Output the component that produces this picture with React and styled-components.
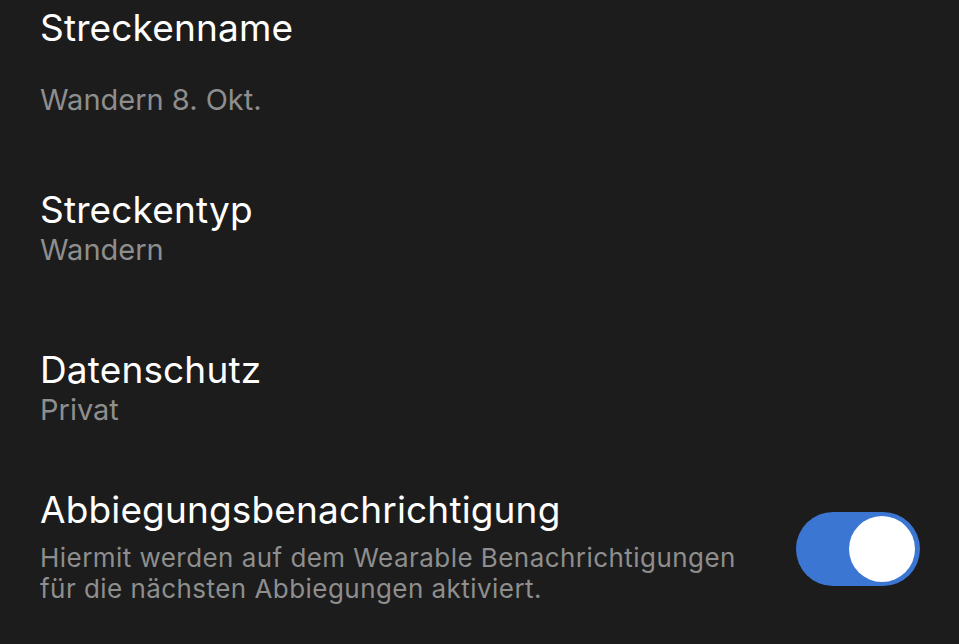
import styled, { createGlobalStyle } from "styled-components";

const GlobalStyle = createGlobalStyle`
  body {
    margin: 0;
    background: #1c1c1c;
    font-family: Inter, "Noto Sans", sans-serif;
  }
`;

const Page = styled.div`
  width: 959px;
  height: 644px;
  overflow: hidden;
  background: #1c1c1c;
  padding: 8px 39px 0 40px;
  box-sizing: border-box;
  display: flex;
  flex-direction: column;
`;

const Item = styled.div`
  display: flex;
  align-items: center;
  justify-content: space-between;
  margin-top: ${(p) => p.$top || 0}px;
`;

const Text = styled.div`
  display: flex;
  flex-direction: column;
`;

const Title = styled.div`
  color: #ffffff;
  font-size: 37px;
  line-height: 40px;
  font-weight: 400;
  letter-spacing: 0.15px;
`;

const Value = styled.div`
  color: #8e8e8e;
  font-size: 29px;
  line-height: 40px;
  margin-top: ${(p) => p.$gap || 0}px;
`;

const Desc = styled.div`
  color: #8e8e8e;
  font-size: 26px;
  line-height: 31px;
  margin-top: 12px;
  letter-spacing: 0.45px;
`;

const Toggle = styled.div`
  width: 124px;
  height: 74px;
  border-radius: 37px;
  background: #3a76d2;
  display: flex;
  align-items: center;
  justify-content: flex-end;
  padding: 0 5px;
  box-sizing: border-box;
  margin-top: 4px;
`;

const Knob = styled.div`
  width: 66px;
  height: 66px;
  border-radius: 50%;
  background: #ffffff;
`;

export default function App() {
  return (
    <>
      <GlobalStyle />
      <Page>
        <Item>
          <Text>
            <Title>Streckenname</Title>
            <Value $gap={32}>Wandern 8. Okt.</Value>
          </Text>
        </Item>
        <Item $top={70}>
          <Text>
            <Title>Streckentyp</Title>
            <Value>Wandern</Value>
          </Text>
        </Item>
        <Item $top={80}>
          <Text>
            <Title>Datenschutz</Title>
            <Value>Privat</Value>
          </Text>
        </Item>
        <Item $top={60}>
          <Text>
            <Title>Abbiegungsbenachrichtigung</Title>
            <Desc>
              Hiermit werden auf dem Wearable Benachrichtigungen
              <br />
              für die nächsten Abbiegungen aktiviert.
            </Desc>
          </Text>
          <Toggle>
            <Knob />
          </Toggle>
        </Item>
      </Page>
    </>
  );
}
